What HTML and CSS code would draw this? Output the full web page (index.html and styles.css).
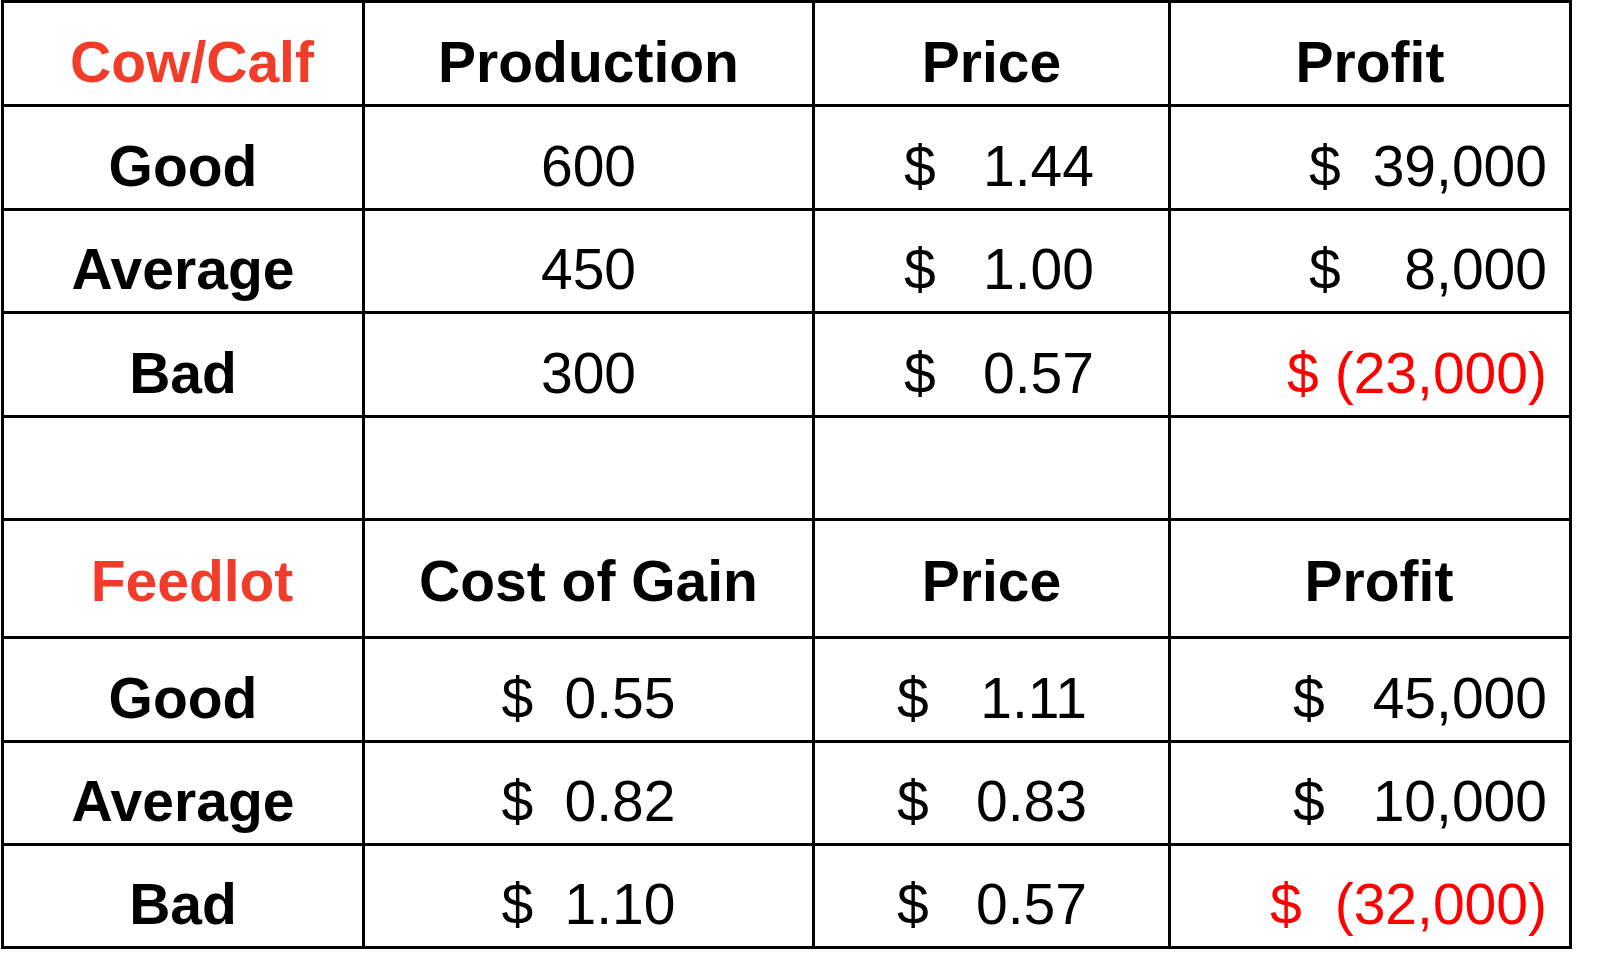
FILE: index.html
```html
<!DOCTYPE html>
<html lang="en">
<head>
<meta charset="utf-8">
<title>Cow/Calf and Feedlot Scenarios</title>
<link rel="stylesheet" href="styles.css">
</head>
<body>
<div class="sheet">
  <div class="cell head red shift">Cow/Calf</div>
  <div class="cell head">Production</div>
  <div class="cell head">Price</div>
  <div class="cell head">Profit</div>

  <div class="cell head">Good</div>
  <div class="cell">600</div>
  <div class="cell price1"><span class="acct w190"><span>$</span><span>1.44</span></span></div>
  <div class="cell profit"><span class="acct w238"><span>$</span><span>39,000</span></span></div>

  <div class="cell head">Average</div>
  <div class="cell">450</div>
  <div class="cell price1"><span class="acct w190"><span>$</span><span>1.00</span></span></div>
  <div class="cell profit"><span class="acct w238"><span>$</span><span>8,000</span></span></div>

  <div class="cell head">Bad</div>
  <div class="cell">300</div>
  <div class="cell price1"><span class="acct w190"><span>$</span><span>0.57</span></span></div>
  <div class="cell profit neg"><span class="acct w260"><span>$</span><span>(23,000)</span></span></div>

  <div class="cell"></div>
  <div class="cell"></div>
  <div class="cell"></div>
  <div class="cell"></div>

  <div class="cell head red shift tall">Feedlot</div>
  <div class="cell head tall">Cost of Gain</div>
  <div class="cell head tall">Price</div>
  <div class="cell head tall shift">Profit</div>

  <div class="cell head">Good</div>
  <div class="cell"><span class="acct w174"><span>$</span><span>0.55</span></span></div>
  <div class="cell price2"><span class="acct w190"><span>$</span><span>1.11</span></span></div>
  <div class="cell profit"><span class="acct w254"><span>$</span><span>45,000</span></span></div>

  <div class="cell head">Average</div>
  <div class="cell"><span class="acct w174"><span>$</span><span>0.82</span></span></div>
  <div class="cell price2"><span class="acct w190"><span>$</span><span>0.83</span></span></div>
  <div class="cell profit"><span class="acct w254"><span>$</span><span>10,000</span></span></div>

  <div class="cell head">Bad</div>
  <div class="cell"><span class="acct w174"><span>$</span><span>1.10</span></span></div>
  <div class="cell price2"><span class="acct w190"><span>$</span><span>0.57</span></span></div>
  <div class="cell profit neg"><span class="acct w277"><span>$</span><span>(32,000)</span></span></div>
</div>
</body>
</html>
```

FILE: styles.css
```css
html, body {
  margin: 0;
  padding: 0;
  background: #ffffff;
}

body {
  font-family: "Liberation Sans", Arial, sans-serif;
  color: #000000;
}

.sheet {
  display: grid;
  grid-template-columns: 358px 447px 353px 398px;
  grid-template-rows: 101px 101px 100px 101px 100px 115px 101px 100px 100px;
  gap: 3px;
  padding: 3px;
  background: #000000;
  width: max-content;
  margin: 0 0 0 1px;
}

.cell {
  background: #ffffff;
  display: flex;
  align-items: flex-end;
  justify-content: center;
  font-size: 57px;
  line-height: 57px;
  padding-bottom: 13px;
  box-sizing: border-box;
  white-space: nowrap;
}

.head {
  font-weight: bold;
}

.red {
  color: #f23c2a;
}

.shift {
  padding-left: 18px;
}

.tall {
  padding-bottom: 26px;
}

.acct {
  display: inline-flex;
  justify-content: space-between;
}

.w174 { width: 174px; }
.w190 { width: 190px; }
.w238 { width: 238px; }
.w254 { width: 254px; }
.w260 { width: 260px; }
.w277 { width: 277px; }

.price1 {
  justify-content: flex-end;
  padding-right: 74px;
}

.price2 {
  justify-content: flex-end;
  padding-right: 81px;
}

.profit {
  justify-content: flex-end;
  padding-right: 22px;
}

.neg {
  color: #ff0000;
}
```
